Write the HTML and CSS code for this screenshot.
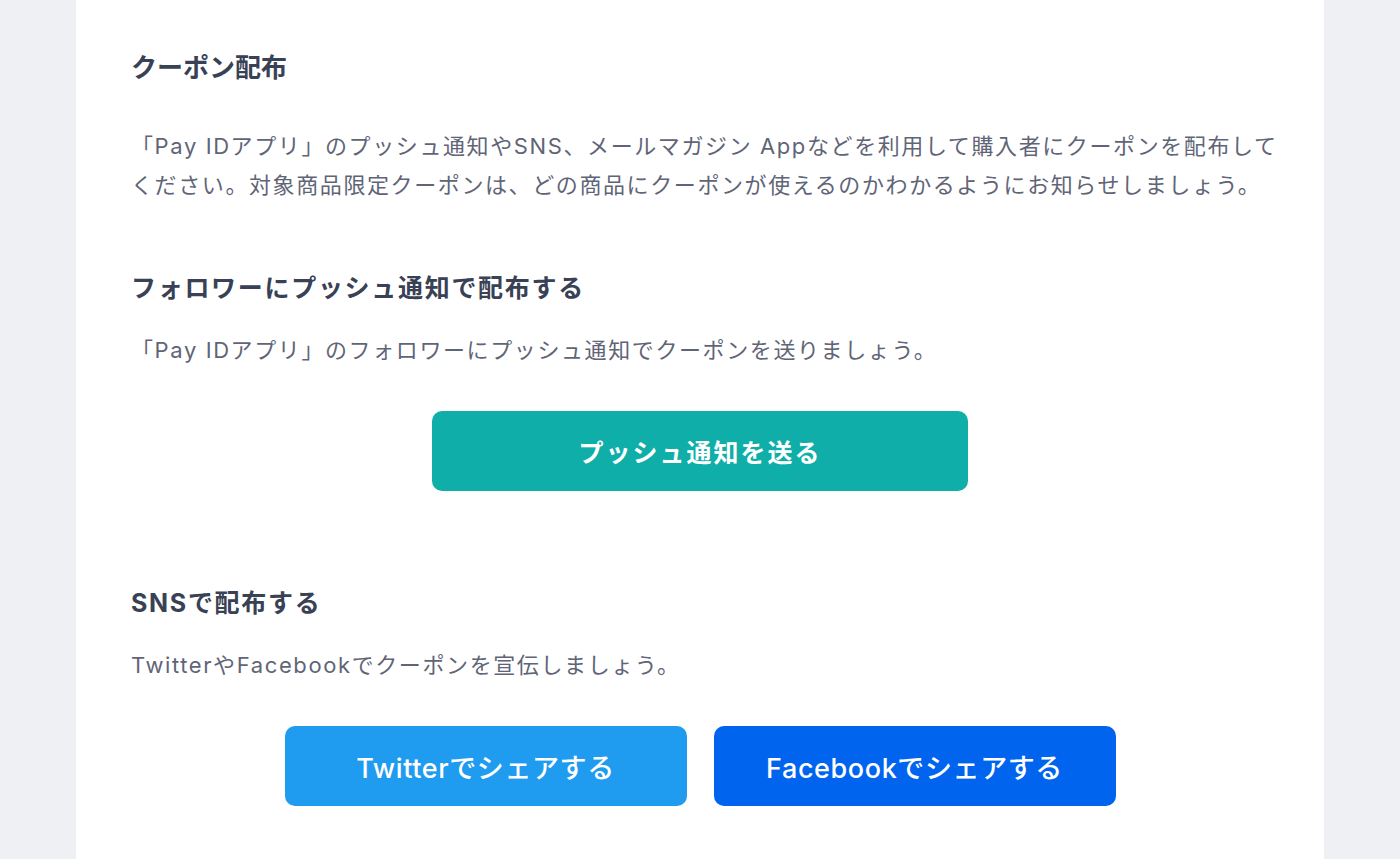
FILE: index.html
```html
<!DOCTYPE html>
<html lang="ja">
  <head>
    <meta charset="UTF-8" />
    <meta name="viewport" content="width=device-width, initial-scale=1.0" />
    <title>クーポン配布</title>
    <link rel="stylesheet" href="styles.css">
  </head>
  <body>
    <main class="card">
      <h1 class="title">クーポン配布</h1>
      <p class="lead">「Pay IDアプリ」のプッシュ通知やSNS、メールマガジン Appなどを利用して購入者にクーポンを配布してください。対象商品限定クーポンは、どの商品にクーポンが使えるのかわかるようにお知らせしましょう。</p>

      <!-- push -->
      <section class="section">
        <h2 class="section-title">フォロワーにプッシュ通知で配布する</h2>
        <p class="text">「Pay IDアプリ」のフォロワーにプッシュ通知でクーポンを送りましょう。</p>
        <div class="actions">
          <button class="btn btn-push">プッシュ通知を送る</button>
        </div>
      </section>

      <!-- sns -->
      <section class="section section-sns">
        <h2 class="section-title">SNSで配布する</h2>
        <p class="text">TwitterやFacebookでクーポンを宣伝しましょう。</p>
        <div class="actions">
          <button class="btn btn-share btn-twitter">Twitterでシェアする</button>
          <button class="btn btn-share btn-facebook">Facebookでシェアする</button>
        </div>
      </section>
    </main>
  </body>
</html>
```

FILE: styles.css
```css
* {
  margin: 0;
  padding: 0;
  box-sizing: border-box;
}

body {
  background-color: #eff0f4;
  font-family: Inter, "Noto Sans CJK JP", sans-serif;
  color: #394155;
}

.card {
  width: 1248px;
  min-height: 859px;
  margin: 0 auto;
  padding: 50px 55px 40px;
  background-color: #ffffff;
}

.title {
  font-size: 26px;
  line-height: 36px;
  font-weight: 700;
}

.lead,
.text {
  font-size: 22px;
  line-height: 39px;
  letter-spacing: 1.6px;
  color: #5f6577;
}

.lead {
  margin-top: 41px;
  /* let the long line run a little into the padding */
  margin-right: -10px;
}

.section {
  margin-top: 65px;
}

.section-sns {
  margin-top: 94px;
}

.section-title {
  font-size: 25px;
  line-height: 36px;
  font-weight: 700;
  letter-spacing: 1.7px;
}

.text {
  margin-top: 25px;
}

.actions {
  display: flex;
  justify-content: center;
  gap: 27px;
  margin-top: 41px;
}

.btn {
  height: 80px;
  border: none;
  border-radius: 10px;
  color: #ffffff;
  font-family: Inter, "Noto Sans CJK JP", sans-serif;
  cursor: pointer;
}

.btn-push {
  width: 536px;
  background-color: #10aea8;
  font-size: 25px;
  font-weight: 700;
  letter-spacing: 2px;
}

.btn-share {
  width: 402px;
  font-size: 27px;
  font-weight: 500;
  letter-spacing: 0.6px;
}

.btn-twitter {
  background-color: #1f9bef;
}

.btn-facebook {
  background-color: #0064ef;
}
```
